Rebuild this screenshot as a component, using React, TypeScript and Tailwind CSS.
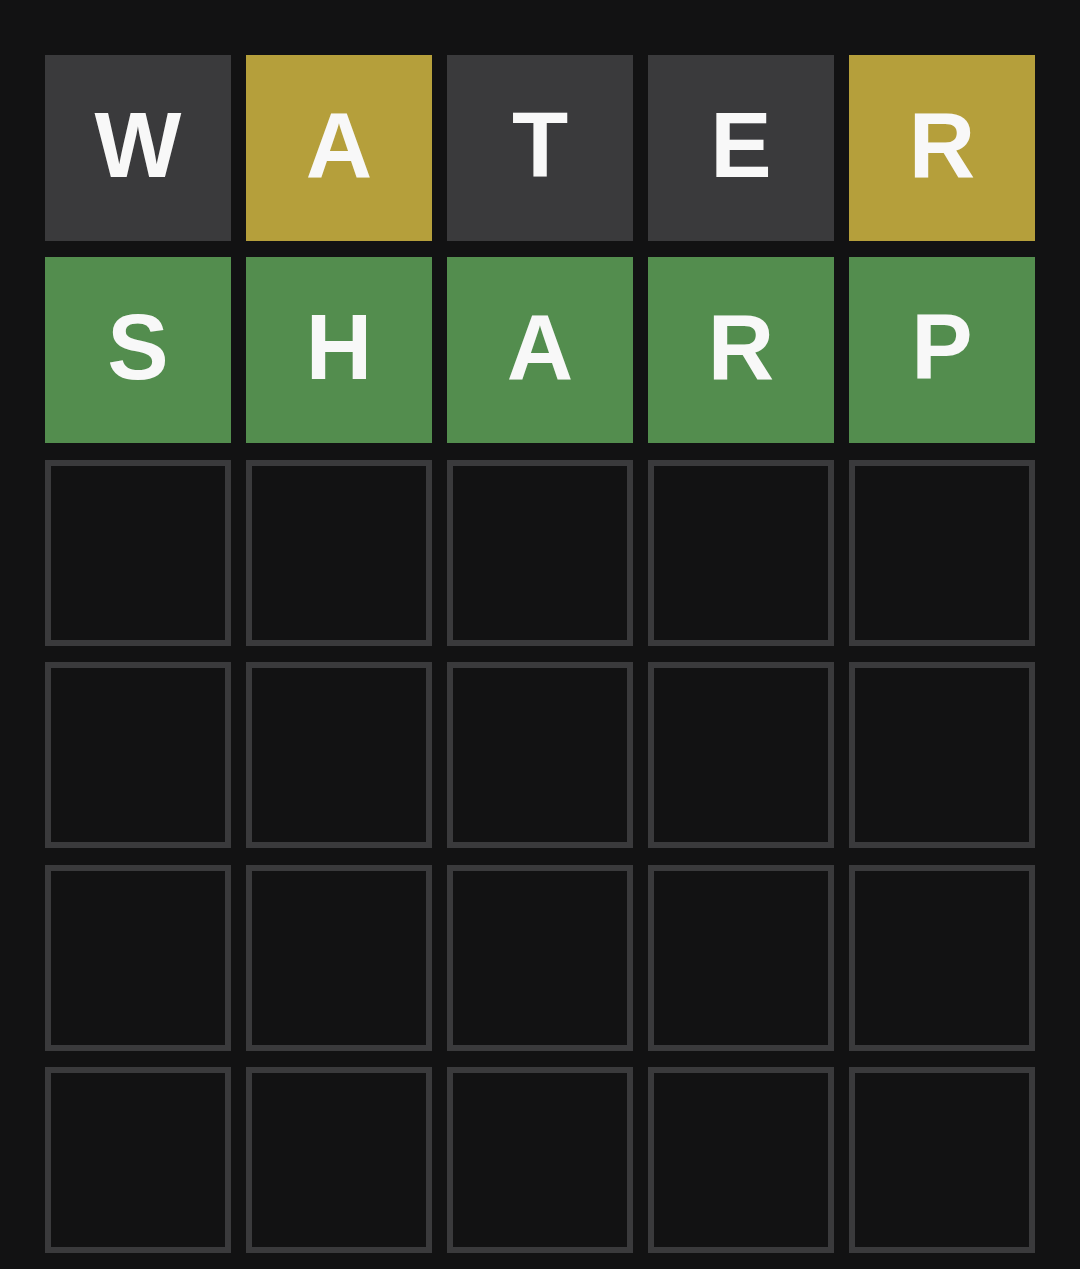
const guesses: { letter: string; state: 'absent' | 'present' | 'correct' }[][] = [
  [
    { letter: 'W', state: 'absent' },
    { letter: 'A', state: 'present' },
    { letter: 'T', state: 'absent' },
    { letter: 'E', state: 'absent' },
    { letter: 'R', state: 'present' },
  ],
  [
    { letter: 'S', state: 'correct' },
    { letter: 'H', state: 'correct' },
    { letter: 'A', state: 'correct' },
    { letter: 'R', state: 'correct' },
    { letter: 'P', state: 'correct' },
  ],
];

const stateClass = {
  absent: 'bg-[#3a3a3c]',
  present: 'bg-[#b59f3b]',
  correct: 'bg-[#538d4e]',
};

export default function App() {
  const rows = Array.from({ length: 6 }, (_, r) => guesses[r] ?? null);

  return (
    <div className="min-h-[1269px] w-full bg-[#121213] px-[45px] pt-[55px] font-['Liberation_Sans',Arial,sans-serif]">
      <div className="grid grid-cols-5 gap-x-[15px] gap-y-[16.4px]">
        {rows.map((row, r) =>
          Array.from({ length: 5 }, (_, c) => {
            const tile = row?.[c];
            if (!tile) {
              return <div key={`${r}-${c}`} className="h-[186px] border-[6px] border-[#3a3a3c]" />;
            }
            return (
              <div
                key={`${r}-${c}`}
                className={`flex h-[186px] items-center justify-center pb-[7px] text-[92px] font-bold leading-none text-[#f8f8f8] ${stateClass[tile.state]}`}
              >
                {tile.letter}
              </div>
            );
          })
        )}
      </div>
    </div>
  );
}
